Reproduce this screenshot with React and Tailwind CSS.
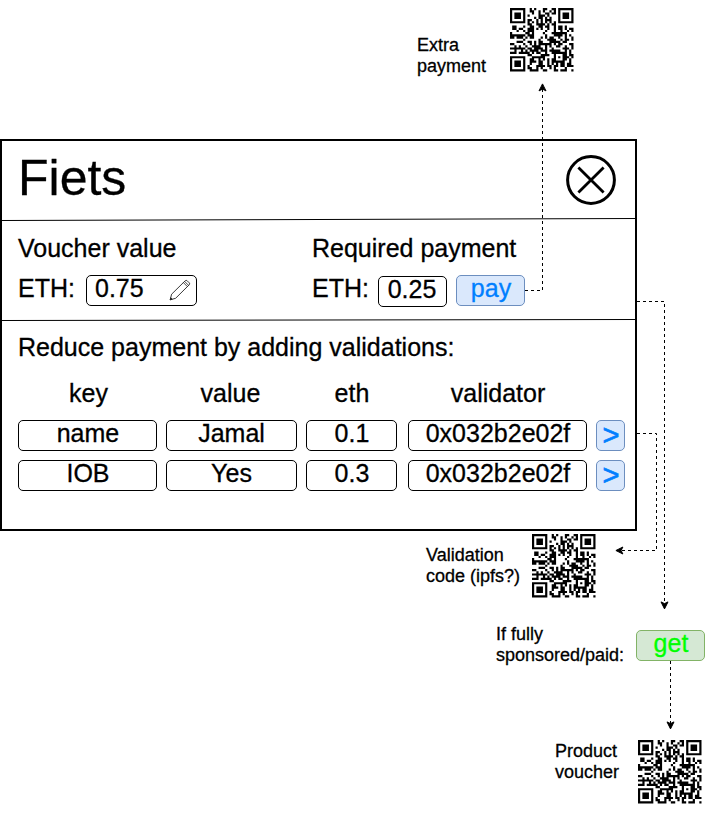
const QR_ROWS = [
  '1fca337f', '104ca541', '17449b5d', '1750e85d', '1742d45d', '10595c41', '1fd5557f', '0019eb00',
  '0c4cd968', '0d9d496b', '025c1125', '103423f8', '1fdc11ea', '1bac5649', '00408f2d', '039ac7d8',
  '184afd63', '052794c9', '1fdbd21d', '04af77ca', '1df593fa', '0018791b', '1fc7e15d', '104cab1a',
  '174ecbf2', '1748cab6', '1751edb7', '10594508', '1fcf31b9',
];

// One sub-path per horizontal run of dark modules.
const QR_PATH = QR_ROWS.map((hex, y) => {
  const bits = parseInt(hex, 16).toString(2).padStart(29, '0');
  return [...bits.matchAll(/1+/g)].map((m) => `M${m.index} ${y}h${m[0].length}v1h-${m[0].length}z`).join('');
}).join('');

function QrCode({ className }) {
  return (
    <svg viewBox="0 0 29 29" className={`absolute h-[63.5px] w-[63.5px] ${className}`}>
      <path d={QR_PATH} />
    </svg>
  );
}

function Label({ className, children }) {
  return <p className={`absolute text-[18px] leading-[21px] whitespace-nowrap ${className}`}>{children}</p>;
}

function Field({ className = 'justify-center', children }) {
  return (
    <div className={`flex h-[31px] items-start rounded-[5px] border border-black bg-white leading-6 ${className}`}>
      {children}
    </div>
  );
}

function CloseIcon() {
  return (
    <svg viewBox="0 0 50 50" className="h-[50px] w-[50px]" fill="none" stroke="black" strokeWidth="3">
      <circle cx="25" cy="25" r="23.4" />
      <path d="M12.4 12.4 37.6 37.6M37.6 12.4 12.4 37.6" strokeWidth="2.8" />
    </svg>
  );
}

function PencilIcon() {
  return (
    <svg viewBox="0 0 22 22" className="h-[22px] w-[22px]" fill="none" stroke="#222" strokeWidth="0.9" strokeLinejoin="round">
      <path d="M1.2 20.8 2.6 15.2 16.2 1.8Q17.2.9 18.2 1.8L20.2 3.8Q21.2 4.8 20.2 5.8L6.6 19.3Z" />
      <path d="M14.4 3.6 18.4 7.6M15.6 2.4 19.6 6.4" strokeWidth="0.8" />
      <path d="M1.2 20.8 1.7 18.8 3.2 20.2Z" fill="#222" />
    </svg>
  );
}

const rows = [
  ['name', 'Jamal', '0.1', '0x032b2e02f'],
  ['IOB', 'Yes', '0.3', '0x032b2e02f'],
];

const COLS = 'grid grid-cols-[139px_131px_93px_179px_29px] gap-x-[9px]';

export default function App() {
  return (
    <div className="relative h-[814px] w-[711px] overflow-hidden bg-white pt-[139px] font-['Liberation_Sans',Arial,sans-serif] text-black [-webkit-text-stroke:0.3px_currentColor]">
      <main className="flex h-[392px] w-[637px] flex-col border-2 border-black text-[25px] leading-[28px]">
        <header className="flex h-[79px] items-start justify-between pt-[9px] pr-[19px] pl-[16px]">
          <h1 className="text-[50px] leading-[56px]">Fiets</h1>
          <button className="mt-[5px]" aria-label="Close"><CloseIcon /></button>
        </header>

        <section className="grid h-[100px] grid-cols-[294px_1fr] pt-[14px] pl-4">
          <div>
            <h2>Voucher value</h2>
            <div className="mt-[13px] flex items-start">
              <span className="mt-px w-[68px] leading-6">ETH:</span>
              <Field className="w-[111px] justify-between pr-[5px] pl-[8px]">
                <span>0.75</span>
                <span className="mt-[3px]"><PencilIcon /></span>
              </Field>
            </div>
          </div>
          <div>
            <h2>Required payment</h2>
            <div className="mt-[13px] flex items-start">
              <span className="mt-px w-[66px] leading-6">ETH:</span>
              <Field className="mt-px w-[69px] justify-center pr-px">0.25</Field>
              <button className="ml-[9px] flex h-[31px] w-[69px] items-start justify-center rounded-[5px] border border-[#6c8ebf] bg-[#dae8fc] pl-px leading-6 text-[#007fff]">
                pay
              </button>
            </div>
          </div>
        </section>

        <section className="pt-[13px] pl-4">
          <h2>Reduce payment by adding validations:</h2>
          <div className={`${COLS} mt-[18px] text-center`}>
            <span className="pl-[2px]">key</span>
            <span className="pr-[2px]">value</span>
            <span className="w-[91px] pl-px">eth</span>
            <span className="pl-px">validator</span>
          </div>
          <div className="mt-[13px] flex flex-col gap-[9px]">
            {rows.map(([key, value, eth, validator]) => (
              <div key={key} className={COLS}>
                <Field className="justify-center pl-px">{key}</Field>
                <Field>{value}</Field>
                <Field className="w-[91px] justify-center pl-px">{eth}</Field>
                <Field className="justify-center pl-px">{validator}</Field>
                <button className="flex h-[31px] items-start justify-center rounded-[5px] border border-[#6c8ebf] bg-[#dae8fc] pl-px text-[29px] leading-[28px] text-[#007fff] [-webkit-text-stroke:0.7px_currentColor]">
                  &gt;
                </button>
              </div>
            ))}
          </div>
        </section>
      </main>

      {/* Slightly slanted dividers and the dashed connectors */}
      <svg viewBox="0 0 711 814" className="pointer-events-none absolute inset-0 h-[814px] w-[711px]" fill="none" stroke="black">
        <path d="M1 220.5 637 218.5M1 320.5 636 319.5" />
        <g strokeDasharray="3 3">
          <path d="M525 290.5H542.5V89" />
          <path d="M637 301.5H664.5V604" />
          <path d="M637 433.5H656.5V550.5H621" />
          <path d="M670.5 661V724" />
        </g>
        <g fill="black">
          <path d="M542.5 83.9 546 90.9 542.5 89.1 539 90.9Z" />
          <path d="M664.5 608.9 661 601.9 664.5 603.6 668 601.9Z" />
          <path d="M615.9 550.5 622.9 547 621.1 550.5 622.9 554Z" />
          <path d="M670.5 728.9 667 721.9 670.5 723.6 674 721.9Z" />
        </g>
      </svg>

      <Label className="top-[35px] left-[417px]">Extra<br />payment</Label>
      <QrCode className="top-[8.3px] left-[510.4px]" />

      <Label className="top-[545px] left-[426px]">Validation<br />code (ipfs?)</Label>
      <QrCode className="top-[534.3px] left-[532.4px]" />

      <Label className="top-[624px] left-[496px]">If fully<br />sponsored/paid:</Label>
      <button className="absolute top-[630px] left-[636px] flex h-[31px] w-[69px] items-start justify-center rounded-[5px] border border-[#82b366] bg-[#d5e8d4] pl-px text-[25px] leading-6 text-[#00ff00]">
        get
      </button>

      <Label className="top-[741px] left-[555px]">Product<br />voucher</Label>
      <QrCode className="top-[740.3px] left-[638.4px]" />
    </div>
  );
}
